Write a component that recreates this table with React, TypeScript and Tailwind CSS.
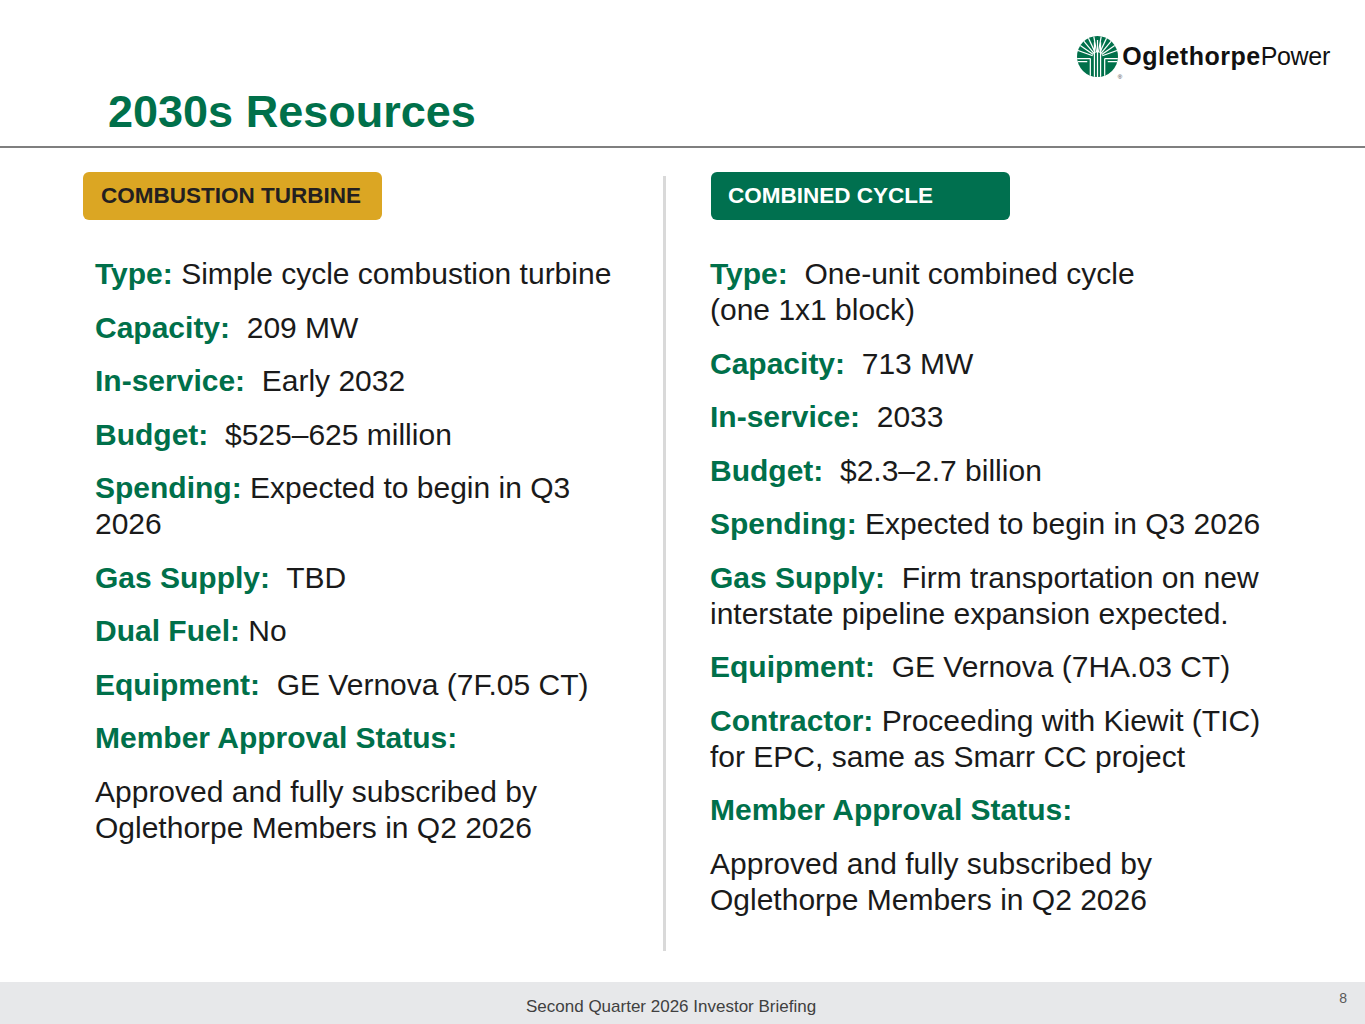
import React from "react";

const green = "text-[#00704a]";

const Logo = () => {
  // fan lines of the tree mark, from the hub up to the rim
  const fan = [200, 215, 230, 245, 260, 280, 295, 310, 325, 340];
  return (
    <div className="flex items-center">
      <div className="relative">
        <svg width="41" height="41" viewBox="0 0 40 40">
          <defs>
            <clipPath id="disc">
              <circle cx="20" cy="20" r="20" />
            </clipPath>
          </defs>
          <circle cx="20" cy="20" r="20" fill="#00704a" />
          <g clipPath="url(#disc)" stroke="#fff" strokeWidth="1.2" fill="none">
            {fan.map((a) => {
              const r = (a * Math.PI) / 180;
              return (
                <line
                  key={a}
                  x1={20 + 5 * Math.cos(r)}
                  y1={21 + 5 * Math.sin(r)}
                  x2={20 + 24 * Math.cos(r)}
                  y2={21 + 24 * Math.sin(r)}
                />
              );
            })}
            <line x1="17" y1="6" x2="17" y2="41" />
            <line x1="20" y1="4" x2="20" y2="41" />
            <line x1="23" y1="6" x2="23" y2="41" />
            <line x1="0" y1="22" x2="13" y2="22" />
            <line x1="27" y1="22" x2="40" y2="22" />
            <line x1="13" y1="22" x2="13" y2="41" />
            <line x1="27" y1="22" x2="27" y2="41" />
            <line x1="0" y1="25" x2="10" y2="25" />
            <line x1="30" y1="25" x2="40" y2="25" />
          </g>
        </svg>
        <span className="absolute right-[-4px] bottom-[-3px] text-[6px] leading-none text-[#333]">®</span>
      </div>
      <div className="ml-[4px] text-[25px] leading-none text-[#111]">
        <span className="font-bold tracking-[0.5px]">Oglethorpe</span>
        <span className="tracking-[-0.3px]">Power</span>
      </div>
    </div>
  );
};

const Item = ({ label, gap = 1, children }: { label: string; gap?: number; children?: React.ReactNode }) => (
  <p>
    <span className={`font-bold ${green}`}>{label}</span>
    {gap === 2 ? "\u00a0 " : " "}
    {children}
  </p>
);

export default function App() {
  return (
    <div className="flex h-[1024px] w-[1365px] flex-col overflow-hidden bg-white font-['Liberation_Sans',Arial,sans-serif]">
      {/* header */}
      <div className="flex justify-end pr-[35px] pt-[36px]">
        <Logo />
      </div>
      <h1 className={`ml-[108px] mt-[12px] text-[45px] font-bold leading-none ${green}`}>2030s Resources</h1>
      <div className="mt-[12px] h-[2px] bg-[#7f7f7f]" />

      {/* two columns */}
      <div className="flex flex-1 text-[30px] leading-[36px] text-[#1a1a1a]">
        <div className="w-[663px] pl-[83px] pt-[24px]">
          <div className="flex h-[48px] w-[299px] items-center rounded-[6px] bg-[#dba623] pl-[18px] text-[22.5px] font-bold text-[#231f20]">
            COMBUSTION TURBINE
          </div>
          <div className="mt-[36px] flex flex-col gap-[17.5px] pl-[12px]">
            <Item label="Type:">Simple cycle combustion turbine</Item>
            <Item label="Capacity:" gap={2}>209 MW</Item>
            <Item label="In-service:" gap={2}>Early 2032</Item>
            <Item label="Budget:" gap={2}>$525–625 million</Item>
            <Item label="Spending:">
              Expected to begin in Q3
              <br />
              2026
            </Item>
            <Item label="Gas Supply:" gap={2}>TBD</Item>
            <Item label="Dual Fuel:">No</Item>
            <Item label="Equipment:" gap={2}>GE Vernova (7F.05 CT)</Item>
            <p className={`font-bold ${green}`}>Member Approval Status:</p>
            <p>
              Approved and fully subscribed by
              <br />
              Oglethorpe Members in Q2 2026
            </p>
          </div>
        </div>

        <div className="mt-[28px] h-[775px] w-[3px] bg-[#d9d9d9]" />

        <div className="flex-1 pl-[45px] pt-[24px]">
          <div className="flex h-[48px] w-[299px] items-center rounded-[6px] bg-[#00704f] pl-[17px] text-[22.5px] font-bold text-white">
            COMBINED CYCLE
          </div>
          <div className="ml-[-1px] mt-[36px] flex flex-col gap-[17.5px] whitespace-nowrap">
            <Item label="Type:" gap={2}>
              One-unit combined cycle
              <br />
              (one 1x1 block)
            </Item>
            <Item label="Capacity:" gap={2}>713 MW</Item>
            <Item label="In-service:" gap={2}>2033</Item>
            <Item label="Budget:" gap={2}>$2.3–2.7 billion</Item>
            <Item label="Spending:">Expected to begin in Q3 2026</Item>
            <Item label="Gas Supply:" gap={2}>
              Firm transportation on new
              <br />
              interstate pipeline expansion expected.
            </Item>
            <Item label="Equipment:" gap={2}>GE Vernova (7HA.03 CT)</Item>
            <Item label="Contractor:">
              Proceeding with Kiewit (TIC)
              <br />
              for EPC, same as Smarr CC project
            </Item>
            <p className={`font-bold ${green}`}>Member Approval Status:</p>
            <p>
              Approved and fully subscribed by
              <br />
              Oglethorpe Members in Q2 2026
            </p>
          </div>
        </div>
      </div>

      {/* footer */}
      <div className="flex h-[42px] shrink-0 items-start bg-[#e7e8ea]">
        <span className="ml-[526px] mt-[15px] text-[17px] leading-[20px] text-[#404040]">
          Second Quarter 2026 Investor Briefing
        </span>
        <span className="ml-auto mr-[18px] mt-[8px] text-[14px] leading-[16px] text-[#595959]">8</span>
      </div>
    </div>
  );
}
